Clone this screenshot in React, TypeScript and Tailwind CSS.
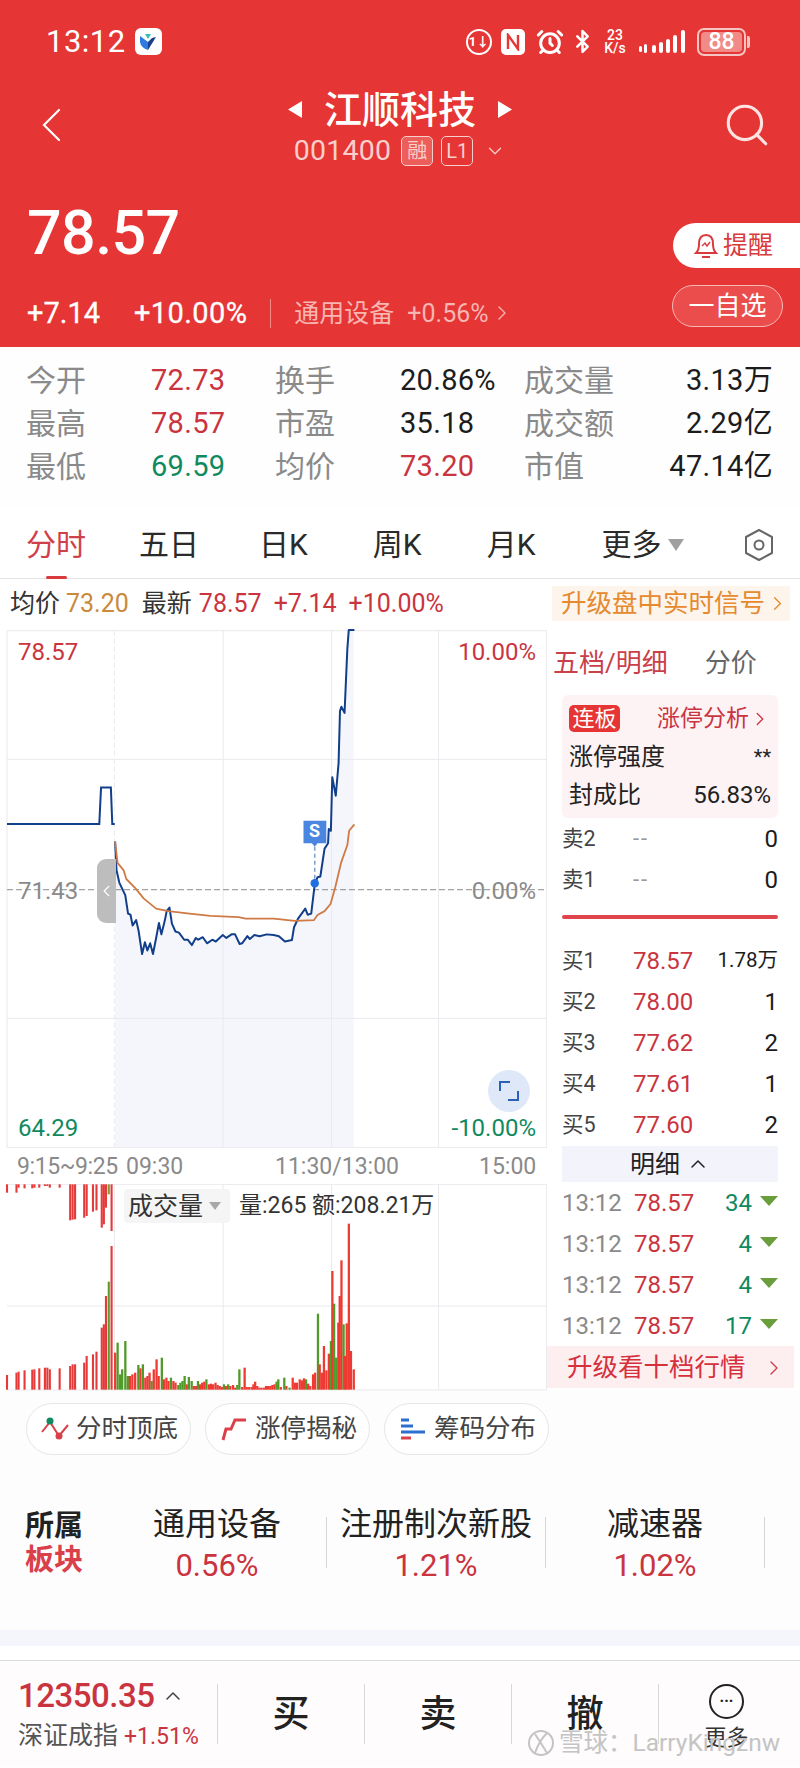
import React from "react";
import { AlarmClock, Bluetooth, ChevronDown, ChevronLeft, ChevronRight, ChevronUp, Search } from "lucide-react";

const RED = "text-[#c9343f]";
const GREEN = "text-[#0f8a5f]";

// chart coordinates were read off the reference crop, so they are not in page pixels
const PRICE_PRE = "20,571 283,571 288,469 316,469 320,571 327,571";
const PRICE_LINE =
  "328,620 332,700 340,735 357,770 365,822 372,825 378,855 388,840 395,870 405,935 413,902 420,925 428,905 436,935 445,890 453,848 460,880 470,840 475,815 483,805 490,850 500,872 510,875 525,895 535,895 547,910 558,890 565,895 578,888 590,905 605,895 615,900 635,882 645,890 660,880 670,880 683,907 690,905 705,885 712,893 725,882 740,885 760,880 780,882 795,885 812,900 832,896 838,860 850,835 870,808 877,825 887,822 897,740 905,720 913,718 925,640 935,625 937,585 943,590 947,440 957,492 965,400 969,255 973,243 982,260 990,80 994,28 1010,28";
const AVG_LINE =
  "328,620 335,680 352,700 360,725 385,750 410,780 445,808 480,815 540,822 600,828 680,832 700,836 780,836 840,842 895,840 905,826 925,815 942,795 955,750 972,680 990,630 995,590 1010,572";

const PRE_BARS: [number, number, number][] = [
  [20, 642, 95], [47, 635, 95], [53, 632, 80], [70, 628, 82], [92, 626, 82], [98, 625, 80], [112, 622, 80],
  [128, 620, 75], [135, 620, 75], [142, 625, 80], [170, 622, 80], [200, 615, 178], [207, 610, 176], [214, 610, 175],
  [240, 605, 170], [247, 585, 165], [265, 580, 152], [275, 572, 148], [290, 500, 200], [296, 490, 190], [302, 405, 140],
  [318, 255, 210],
];

const VOL_BARS: [number, number, string][] = [
  [328, 575, "r"], [335, 545, "g"], [342, 640, "g"], [348, 625, "g"], [357, 540, "g"], [364, 645, "g"], [370, 645, "r"],
  [377, 640, "r"], [385, 635, "r"], [394, 612, "g"], [400, 622, "r"], [407, 610, "g"], [414, 650, "r"], [420, 645, "r"],
  [426, 635, "r"], [432, 660, "g"], [438, 625, "r"], [446, 595, "r"], [452, 645, "r"], [461, 590, "g"], [467, 655, "r"],
  [474, 650, "r"], [480, 660, "r"], [487, 650, "g"], [494, 660, "r"], [500, 665, "r"], [508, 672, "g"], [514, 665, "g"],
  [520, 660, "g"], [526, 645, "g"], [532, 670, "r"], [538, 648, "g"], [546, 660, "g"], [552, 675, "r"], [558, 675, "r"],
  [564, 660, "g"], [570, 670, "r"], [576, 665, "r"], [582, 662, "r"], [588, 655, "g"], [595, 670, "r"], [601, 668, "r"],
  [607, 670, "r"], [614, 665, "r"], [620, 672, "r"], [626, 675, "r"], [632, 678, "r"], [638, 670, "g"], [644, 675, "r"],
  [650, 670, "g"], [656, 675, "r"], [664, 672, "r"], [670, 680, "r"], [676, 672, "g"], [682, 625, "g"], [690, 678, "r"],
  [697, 620, "r"], [703, 678, "r"], [710, 678, "r"], [717, 678, "r"], [722, 670, "r"], [727, 662, "r"], [733, 675, "r"],
  [739, 680, "r"], [745, 680, "r"], [752, 680, "r"], [758, 675, "r"], [764, 675, "r"], [770, 675, "r"], [776, 672, "r"],
  [782, 670, "r"], [788, 662, "g"], [793, 655, "g"], [800, 678, "r"], [810, 650, "g"], [816, 675, "r"], [825, 680, "g"],
  [834, 650, "r"], [840, 665, "r"], [846, 665, "r"], [854, 655, "r"], [860, 658, "r"], [866, 652, "r"], [872, 655, "g"],
  [878, 668, "r"], [884, 675, "r"], [892, 640, "r"], [898, 635, "r"], [906, 458, "g"], [911, 610, "r"], [917, 635, "r"],
  [923, 555, "r"], [930, 628, "r"], [937, 578, "r"], [943, 540, "g"], [947, 330, "r"], [952, 428, "g"], [958, 590, "g"],
  [964, 485, "r"], [968, 405, "r"], [973, 298, "r"], [979, 490, "g"], [983, 585, "r"], [988, 487, "r"], [994, 188, "r"],
  [1000, 570, "r"], [1008, 625, "r"],
];

const GRID_X = [20, 326, 636, 945, 1250, 1558];

function StatusBar() {
  return (
    <div className="flex h-[82px] items-center pl-[46px] pr-[50px] pt-[1px] text-white">
      <span className="text-[31px] leading-none tracking-[0.5px]">13:12</span>
      <div className="ml-[9px] flex h-[27px] w-[27px] items-center justify-center rounded-[6px] bg-white">
        <svg width="20" height="20" viewBox="0 0 20 20">
          <path d="M2 4 L10 10 L10 18 Q3 16 2 10 Z" fill="#2b7be0" />
          <path d="M18 5 L10 18 L10 10 L14 6 Z" fill="#1a3f8f" />
          <path d="M7 2 L13 2 L10 7 Z" fill="#35c3b0" />
        </svg>
      </div>
      <div className="ml-auto flex items-center">
        <div className="flex h-[26px] w-[26px] items-center justify-center rounded-full border-[2.5px] border-white text-[13px] font-bold leading-none">
          1↓
        </div>
        <div className="ml-[9px] flex h-[26px] w-[24px] items-center justify-center rounded-[5px] bg-white">
          <svg width="16" height="18" viewBox="0 0 16 18" fill="none" stroke="#e53534" strokeWidth="2.4">
            <path d="M3 16 V2 L13 16 V2" />
          </svg>
        </div>
        <AlarmClock className="ml-[11px]" size={28} strokeWidth={2.6} />
        <Bluetooth className="ml-[6px]" size={25} strokeWidth={2.4} />
        <div className="ml-[6px] flex w-[28px] flex-col items-center text-[14px] font-medium leading-[13px]">
          <span>23</span>
          <span>K/s</span>
        </div>
        <svg className="ml-[10px]" width="48" height="26" viewBox="0 0 48 26" fill="white">
          <rect x="0" y="17" width="3" height="6" rx="1.5" />
          <rect x="5" y="15" width="3" height="9" rx="1.5" />
          <rect x="13" y="16" width="4" height="8" rx="2" />
          <rect x="20" y="13" width="4" height="11" rx="2" />
          <rect x="27" y="10" width="4" height="14" rx="2" />
          <rect x="34" y="6" width="4" height="18" rx="2" />
          <rect x="42" y="1" width="4" height="23" rx="2" />
        </svg>
        <div className="ml-[10px] flex items-center">
          <div className="flex h-[28px] w-[49px] items-center rounded-[7px] border-2 border-[#f3c6c4] p-[2px]">
            <div className="flex h-full w-[41px] items-center justify-center rounded-[4px] bg-[#f08b88] text-[23px] font-medium leading-none">
              88
            </div>
          </div>
          <div className="ml-[1px] h-[12px] w-[3px] rounded-r-[2px] bg-[#f3c6c4]" />
        </div>
      </div>
    </div>
  );
}

function TitleRow() {
  return (
    <div className="flex h-[88px] items-center justify-between pl-[41px] pr-[28px]">
      <svg className="mt-[-2px]" width="20" height="34" viewBox="0 0 20 34" fill="none" stroke="white" strokeWidth="2.2" strokeLinecap="round">
        <path d="M18 2 L3 17 L18 32" />
      </svg>
      <div className="ml-[17px] flex flex-col items-center pt-[2px]">
        <div className="flex items-center">
          <svg width="14" height="17" viewBox="0 0 14 17" fill="white"><path d="M14 0 V17 L0 8.5 Z" /></svg>
          <span className="mx-[22px] text-[38px] font-medium leading-[44px] text-white">江顺科技</span>
          <svg width="14" height="17" viewBox="0 0 14 17" fill="white"><path d="M0 0 V17 L14 8.5 Z" /></svg>
        </div>
        <div className="mt-[3px] flex items-center text-[#f8cfcc]">
          <span className="text-[28.5px] leading-[32px] tracking-[0.2px]">001400</span>
          <span className="ml-[10px] flex h-[30px] w-[32px] items-center justify-center rounded-[5px] border border-[#f8cfcc] bg-[#ec5e5a] text-[20px] leading-none">
            融
          </span>
          <span className="ml-[8px] flex h-[30px] w-[32px] items-center justify-center rounded-[5px] border border-[#f8cfcc] text-[20px] leading-none">
            L1
          </span>
          <ChevronDown className="ml-[11px]" size={22} strokeWidth={1.4} />
        </div>
      </div>
      <Search className="mt-[-2px] text-[#fde3e1]" size={50} strokeWidth={1.5} />
    </div>
  );
}

function PriceRow() {
  return (
    <div className="flex h-[177px] items-start justify-between pl-[27px]">
      <div className="flex flex-col">
        <div className="mt-[28px] text-[61px] font-medium leading-[70px] tracking-[-0.6px] text-white">78.57</div>
        <div className="mt-[30px] flex h-[30px] items-center">
          <span className="text-[29px] leading-none text-white [-webkit-text-stroke:0.3px_white]">+7.14</span>
          <span className="ml-[34px] text-[29px] leading-none tracking-[0.4px] text-white [-webkit-text-stroke:0.3px_white]">+10.00%</span>
          <div className="ml-[23px] h-[29px] w-px bg-[#f08b88]" />
          <span className="ml-[23px] text-[25px] leading-none text-[#f7b6b2]">通用设备</span>
          <span className="ml-[13px] text-[25px] leading-none text-[#f7b6b2]">+0.56%</span>
          <ChevronRight className="ml-[1px] text-[#f7b6b2]" size={24} strokeWidth={1.4} />
        </div>
      </div>
      <div className="mt-[53px] flex flex-col items-end">
        <div className="flex h-[45px] w-[127px] items-center rounded-l-[23px] bg-white pl-[20px] text-[#d93a3c]">
          <svg width="26" height="28" viewBox="0 0 26 28" fill="none" stroke="currentColor" strokeWidth="2">
            <path d="M3 21 Q6 18 6 12 Q6 3 13 3 Q20 3 20 12 Q20 18 23 21 Z" />
            <path d="M9 25 H17" />
            <path d="M9 14 L12 11 L14 14 L17 10" strokeWidth="1.4" />
          </svg>
          <span className="ml-[4px] text-[25px] leading-none">提醒</span>
        </div>
        <div className="mr-[17px] mt-[17px] flex h-[42px] w-[111px] items-center justify-center rounded-full border border-[#f6b8b5] bg-[#ea4d4b] text-[26px] leading-none text-white">
          一自选
        </div>
      </div>
    </div>
  );
}

function Stat({ label, value, color }: { label: string; value: string; color: string }) {
  return (
    <>
      <span className="text-[30px] leading-[43px] text-[#8a8a8a]">{label}</span>
      <span className={`text-[29px] leading-[43px] tracking-[0.3px] ${color}`}>{value}</span>
    </>
  );
}

function Stats() {
  return (
    <div className="h-[160px] bg-[#fefefe] pt-[12px]">
      <div className="grid grid-cols-[125px_124px_125px_124px_1fr_auto] pl-[26px] pr-[27px]">
        <Stat label="今开" value="72.73" color={RED} />
        <Stat label="换手" value="20.86%" color="text-[#1c1c1c]" />
        <Stat label="成交量" value="3.13万" color="text-[#1c1c1c] text-right" />
        <Stat label="最高" value="78.57" color={RED} />
        <Stat label="市盈" value="35.18" color="text-[#1c1c1c]" />
        <Stat label="成交额" value="2.29亿" color="text-[#1c1c1c] text-right" />
        <Stat label="最低" value="69.59" color={GREEN} />
        <Stat label="均价" value="73.20" color={RED} />
        <Stat label="市值" value="47.14亿" color="text-[#1c1c1c] text-right" />
      </div>
    </div>
  );
}

function Tabs() {
  const tabs: [string, string][] = [
    ["五日", "ml-[53px]"],
    ["日K", "ml-[60px]"],
    ["周K", "ml-[65px]"],
    ["月K", "ml-[65px]"],
    ["更多", "ml-[66px]"],
  ];
  return (
    <div className="relative flex h-[72px] items-center border-b border-[#e3e3e3] bg-white pl-[26px] pr-[25px] pt-[4px]">
      <span className="text-[30px] leading-none text-[#d0404a]">分时</span>
      {tabs.map(([t, m]) => (
        <span key={t} className={`${m} text-[30px] leading-none text-[#2a2a2a]`}>
          {t}
        </span>
      ))}
      <svg className="ml-[7px]" width="16" height="12" viewBox="0 0 16 12" fill="#a0a0a0"><path d="M0 0 H16 L8 12 Z" /></svg>
      <svg className="ml-auto" width="32" height="34" viewBox="0 0 32 34" fill="none" stroke="#666" strokeWidth="2">
        <path d="M16 2 L29 9 V25 L16 32 L3 25 V9 Z" strokeLinejoin="round" />
        <circle cx="16" cy="17" r="4.5" />
      </svg>
      <div className="absolute bottom-[-1px] left-[46px] h-[3px] w-[21px] rounded-full bg-[#d93a3c]" />
    </div>
  );
}

function InfoRow() {
  return (
    <div className="flex h-[46px] items-center bg-white pl-[10px] pr-[10px] pt-[3px] text-[25px] leading-none">
      <span className="text-[#333]">均价</span>
      <span className="ml-[6px] text-[#c98a3c]">73.20</span>
      <span className="ml-[13px] text-[#333]">最新</span>
      <span className={`ml-[7px] ${RED}`}>78.57</span>
      <span className={`ml-[12px] ${RED}`}>+7.14</span>
      <span className={`ml-[12px] ${RED}`}>+10.00%</span>
      <div className="ml-auto flex h-[35px] w-[238px] items-center bg-[#fdf4ec] pl-[9px] text-[25.5px] text-[#e58a2e]">
        升级盘中实时信号
        <ChevronRight className="ml-[1px]" size={23} strokeWidth={1.4} />
      </div>
    </div>
  );
}

function ChartLabel({ className, children }: { className: string; children: React.ReactNode }) {
  return <span className={`absolute text-[24px] leading-[24px] ${className}`}>{children}</span>;
}

function PriceChart() {
  const ns = { vectorEffect: "non-scaling-stroke" as const };
  return (
    <div className="relative h-[523px]">
      <svg className="absolute inset-0 h-full w-full" viewBox="0 14 1559 1464" preserveAspectRatio="none" fill="none">
        {/* the shade is the area under the price line */}
        <polygon points={`${PRICE_LINE} 1008,28 1008,1478 328,1478`} fill="#f5f6fc" />
        {GRID_X.map((x) => (
          <line key={x} x1={x} x2={x} y1="30" y2="1478" stroke="#e9e9ee" strokeWidth="1" strokeDasharray={x === 326 ? "5 3" : undefined} {...ns} />
        ))}
        {[30, 390, 1115, 1477].map((y) => (
          <line key={y} x1="20" x2="1558" y1={y} y2={y} stroke="#e9e9ee" strokeWidth="1" {...ns} />
        ))}
        <line x1="20" x2="1558" y1="755" y2="755" stroke="#8c8c8c" strokeWidth="1" strokeDasharray="6 3" {...ns} />
        <polyline points={PRICE_PRE} stroke="#123f8a" strokeWidth="2" {...ns} />
        <polyline points={PRICE_LINE} stroke="#123f8a" strokeWidth="2" strokeLinejoin="round" {...ns} />
        <polyline points={AVG_LINE} stroke="#cf7a45" strokeWidth="1.8" strokeLinejoin="round" {...ns} />
        <line x1="897" x2="897" y1="635" y2="730" stroke="#7d9cc8" strokeWidth="1.5" strokeDasharray="4 3" {...ns} />
        <ellipse cx="897" cy="737" rx="12" ry="12" fill="#1f6fe0" />
        <path d="M865 562 H930 V625 H905 L897 635 L889 625 H865 Z" fill="#4a86e0" />
      </svg>
      <ChartLabel className={`left-[18px] top-[15px] ${RED}`}>78.57</ChartLabel>
      <ChartLabel className="left-[18px] top-[254px] text-[#8a8a8a]">71.43</ChartLabel>
      <ChartLabel className={`left-[18px] top-[491px] ${GREEN}`}>64.29</ChartLabel>
      <ChartLabel className={`right-[11px] top-[15px] ${RED}`}>10.00%</ChartLabel>
      <ChartLabel className="right-[11px] top-[254px] text-[#8a8a8a]">0.00%</ChartLabel>
      <ChartLabel className={`right-[11px] top-[491px] ${GREEN}`}>-10.00%</ChartLabel>
      <span className="absolute left-[303px] top-[195px] flex h-[22px] w-[23px] items-center justify-center text-[18px] font-bold leading-none text-white">
        S
      </span>
      <div className="absolute left-[97px] top-[234px] flex h-[64px] w-[19px] items-center justify-center rounded-l-[9px] bg-[#bdbdbd]">
        <ChevronLeft className="text-white" size={26} strokeWidth={1.4} />
      </div>
      <div className="absolute left-[488px] top-[445px] flex h-[42px] w-[42px] items-center justify-center rounded-full bg-[#dfe8f8]">
        <svg width="20" height="20" viewBox="0 0 20 20" fill="none" stroke="#2a62b8" strokeWidth="2">
          <path d="M1 10 V1 H11" />
          <path d="M19 10 V19 H9" />
        </svg>
      </div>
    </div>
  );
}

function TimeAxis() {
  return (
    <div className="flex h-[36px] items-center pl-[17px] text-[23px] leading-none text-[#8a8a8a]">
      <span className="w-[109px] tracking-[-0.4px]">9:15~9:25</span>
      <span className="w-[149px]">09:30</span>
      <span className="w-[204px]">11:30/13:00</span>
      <span>15:00</span>
    </div>
  );
}

function VolumeChart() {
  const ns = { vectorEffect: "non-scaling-stroke" as const };
  return (
    <div className="relative h-[207px]">
      <svg className="absolute inset-0 h-full w-full" viewBox="0 69 1559 621" preserveAspectRatio="none" fill="none">
        {GRID_X.slice(1).map((x) => (
          <line key={x} x1={x} x2={x} y1="70" y2="686" stroke="#e9e9ee" strokeWidth="1" {...ns} />
        ))}
        {[70, 435, 687].map((y) => (
          <line key={y} x1="20" x2="1558" y1={y} y2={y} stroke="#e9e9ee" strokeWidth="1" {...ns} />
        ))}
        {PRE_BARS.map(([x, top, hang]) => (
          <g key={x} fill="#e5393a">
            <rect x={x - 3} y={top} width="6" height={686 - top} />
            <rect x={x - 3} y="70" width="6" height={hang - 70} />
          </g>
        ))}
        <rect x="307" y="362" width="6" height="324" fill="#5a9a2a" />
        <rect x="307" y="70" width="6" height="30" fill="#7d9a30" />
        {VOL_BARS.map(([x, top, c]) => (
          <rect key={x} x={x - 3} y={top} width="6.5" height={686 - top} fill={c === "r" ? "#ee3a33" : "#4f9a28"} />
        ))}
      </svg>
      <div className="absolute left-[124px] top-[5px] flex h-[34px] w-[106px] items-center rounded-[4px] bg-[#f5f5f5] pl-[4px] text-[25px] leading-none text-[#333]">
        成交量
        <svg className="ml-[6px]" width="12" height="8" viewBox="0 0 12 8" fill="#a8a8a8"><path d="M0 0 H12 L6 8 Z" /></svg>
      </div>
      <span className="absolute left-[239px] top-[10px] text-[23px] leading-none text-[#333]">量:265 额:208.21万</span>
    </div>
  );
}

function QuoteRow({ label, price, vol }: { label: string; price: string; vol: string }) {
  return (
    <div className="flex h-[41px] items-center">
      <span className="w-[71px] text-[21.5px] leading-none text-[#444]">{label}</span>
      {price === "--" ? (
        <span className="text-[22px] leading-none tracking-[2px] text-[#999]">--</span>
      ) : (
        <span className={`text-[24px] leading-none ${RED}`}>{price}</span>
      )}
      <span className={`ml-auto ${vol.length > 2 ? "text-[20.5px]" : "text-[24px]"} leading-none text-[#1c1c1c]`}>{vol}</span>
    </div>
  );
}

function TradeRow({ n }: { n: string }) {
  return (
    <div className="flex h-[41px] items-center text-[24px] leading-none">
      <span className="w-[72px] text-[#8a8a8a]">13:12</span>
      <span className={RED}>78.57</span>
      <span className={`ml-auto ${GREEN}`}>{n}</span>
      <svg className="ml-[8px] mb-[4px]" width="18" height="10" viewBox="0 0 18 10" fill="#6a9e3c"><path d="M0 0 H18 L9 10 Z" /></svg>
    </div>
  );
}

function OrderPanel() {
  return (
    <div className="w-[253px] bg-white">
      <div className="flex h-[70px] items-center pl-[6px] pt-[5px] text-[26px] leading-none">
        <span className="text-[#c9404a]">五档/明细</span>
        <span className="ml-[37px] text-[#666]">分价</span>
      </div>
      <div className="pl-[15px] pr-[22px]">
        <div className="h-[123px] rounded-[6px] bg-[#fdf3f5] px-[7px] pt-[10px]">
          <div className="flex h-[27px] items-center">
            <span className="flex h-[27px] w-[51px] items-center justify-center rounded-[5px] bg-[#e53534] text-[22px] leading-none text-white">连板</span>
            <span className={`ml-auto text-[23px] leading-none ${RED}`}>涨停分析</span>
            <ChevronRight className={RED} size={22} strokeWidth={1.4} />
          </div>
          <div className="mt-[6px] flex h-[38px] items-center justify-between text-[24px] leading-none text-[#222]">
            <span>涨停强度</span>
            <span className="text-[20px]">**</span>
          </div>
          <div className="flex h-[38px] items-center justify-between text-[24px] leading-none text-[#222]">
            <span>封成比</span>
            <span>56.83%</span>
          </div>
        </div>
        <QuoteRow label="卖2" price="--" vol="0" />
        <QuoteRow label="卖1" price="--" vol="0" />
        <div className="mb-[21px] mt-[15px] h-[4px] rounded-full bg-[#e0454d]" />
        <QuoteRow label="买1" price="78.57" vol="1.78万" />
        <QuoteRow label="买2" price="78.00" vol="1" />
        <QuoteRow label="买3" price="77.62" vol="2" />
        <QuoteRow label="买4" price="77.61" vol="1" />
        <QuoteRow label="买5" price="77.60" vol="2" />
        <div className="mt-[1px] flex h-[36px] items-center justify-center bg-[#f3f4fb] text-[25px] leading-none text-[#222]">
          明细
          <ChevronUp className="ml-[6px]" size={24} strokeWidth={1.5} />
        </div>
        <TradeRow n="34" />
        <TradeRow n="4" />
        <TradeRow n="4" />
        <TradeRow n="17" />
      </div>
      <div className="flex h-[42px] w-[247px] items-center bg-[#fdeef0] pl-[20px] pt-[2px] text-[25.5px] leading-none text-[#d6303c]">
        升级看十档行情
        <ChevronRight className="ml-auto mr-[8px] text-[#c9404a]" size={24} strokeWidth={1.4} />
      </div>
    </div>
  );
}

function Chip({ icon, label }: { icon: React.ReactNode; label: string }) {
  return (
    <div className="flex h-[52px] w-[165px] items-center rounded-full border border-[#e6e6e6] bg-white pl-[13px]">
      <div className="flex w-[30px] justify-center">{icon}</div>
      <span className="ml-[6px] text-[25.5px] leading-none text-[#444]">{label}</span>
    </div>
  );
}

function SectorItem({ name, pct }: { name: string; pct: string }) {
  return (
    <div className="flex w-[219px] items-center">
      <div className="flex flex-1 flex-col items-center">
        <span className="text-[32px] leading-[40px] text-[#222]">{name}</span>
        <span className={`mt-[6px] text-[31px] leading-[32px] ${RED}`}>{pct}</span>
      </div>
      <div className="h-[51px] w-px bg-[#d5d5d5]" />
    </div>
  );
}

function BottomAction({ label }: { label: string }) {
  return (
    <>
      <div className="flex w-[146px] items-center justify-center text-[37px] font-medium leading-none text-[#222]">{label}</div>
      <div className="h-[60px] w-px bg-[#d8d8d8]" />
    </>
  );
}

function BottomBar() {
  return (
    <div className="relative flex h-[107px] items-center border-t border-[#dcdcdc] bg-[#fefcfd]">
      <div className="flex w-[217px] flex-col pl-[18px]">
        <div className="flex items-center">
          <span className={`text-[33px] font-medium leading-[38px] tracking-[-0.5px] ${RED}`}>12350.35</span>
          <ChevronUp className="ml-[7px] text-[#444]" size={24} strokeWidth={1.5} />
        </div>
        <div className="mt-[6px] flex items-center">
          <span className="text-[25px] leading-[30px] text-[#555]">深证成指</span>
          <span className={`ml-[6px] text-[23px] leading-none ${RED}`}>+1.51%</span>
        </div>
      </div>
      <div className="h-[60px] w-px bg-[#d8d8d8]" />
      <BottomAction label="买" />
      <BottomAction label="卖" />
      <BottomAction label="撤" />
      <div className="flex flex-1 flex-col items-center pr-[6px] pt-[4px]">
        <div className="flex h-[35px] w-[35px] items-center justify-center rounded-full border-2 border-[#222] pb-[8px] text-[16px] font-bold leading-none text-[#222]">
          ...
        </div>
        <span className="mt-[8px] text-[22px] leading-none text-[#333]">更多</span>
      </div>
      {/* watermark sits over the bar */}
      <div className="absolute left-[527px] top-[68px] flex items-center text-[24.5px] leading-none text-[#c4c4c4]">
        <svg width="28" height="28" viewBox="0 0 28 28" fill="none" stroke="#c4c4c4" strokeWidth="2">
          <circle cx="14" cy="14" r="12" />
          <path d="M8 5 Q14 14 20 24 M20 4 Q12 12 8 24" />
        </svg>
        <span className="ml-[4px]">雪球：LarryKingznw</span>
      </div>
    </div>
  );
}

export default function App() {
  return (
    <div className="h-[1768px] w-[800px] overflow-hidden bg-white font-['Roboto','Noto_Sans_CJK_SC',sans-serif]">
      <div className="h-[347px] bg-[#e53534]">
        <StatusBar />
        <TitleRow />
        <PriceRow />
      </div>
      <Stats />
      <Tabs />
      <InfoRow />
      <div className="flex h-[765px]">
        <div className="w-[547px]">
          <PriceChart />
          <TimeAxis />
          <VolumeChart />
        </div>
        <OrderPanel />
      </div>
      <div className="h-[240px] bg-[#fefdfe]">
        <div className="flex gap-[14px] pl-[26px] pt-[13px]">
          <Chip
            label="分时顶底"
            icon={
              <svg width="28" height="24" viewBox="0 0 28 24" fill="none" stroke="#d9404a" strokeWidth="2">
                <path d="M1 15 L9 5 L18 19 L27 8" />
                <circle cx="9" cy="4" r="3.5" fill="#0f8a5f" stroke="none" />
                <circle cx="18" cy="19" r="3.5" fill="#d9404a" stroke="none" />
              </svg>
            }
          />
          <Chip
            label="涨停揭秘"
            icon={
              <svg width="26" height="24" viewBox="0 0 26 24" fill="none" stroke="#d9404a" strokeWidth="3">
                <path d="M2 23 L5 12 H10 L14 3 H25" />
              </svg>
            }
          />
          <Chip
            label="筹码分布"
            icon={
              <svg width="26" height="24" viewBox="0 0 26 24" strokeWidth="3">
                <path d="M1 3 H9" stroke="#2a6fd0" />
                <path d="M1 9 H13" stroke="#2a6fd0" />
                <path d="M1 15 H25" stroke="#2a6fd0" />
                <path d="M1 21 H11" stroke="#d9404a" />
              </svg>
            }
          />
        </div>
        <div className="mt-[22px] flex h-[126px] items-center pt-[5px]">
          <div className="flex w-[108px] flex-col pl-[25px] text-[29px] font-bold leading-[34px]">
            <span className="text-[#222]">所属</span>
            <span className="text-[#d9404a]">板块</span>
          </div>
          <SectorItem name="通用设备" pct="0.56%" />
          <SectorItem name="注册制次新股" pct="1.21%" />
          <SectorItem name="减速器" pct="1.02%" />
        </div>
      </div>
      <div className="h-[16px] bg-[#f5f6fb]" />
      <div className="h-[14px] bg-white" />
      <BottomBar />
    </div>
  );
}
